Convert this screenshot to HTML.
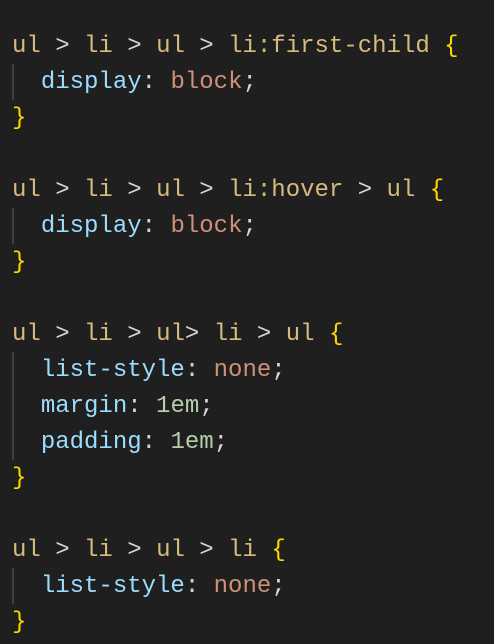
<!DOCTYPE html>
<html><head><style>
html,body{margin:0;padding:0;background:#1f1f1f;width:494px;height:644px;overflow:hidden}
pre{margin:0;position:absolute;left:12px;top:29px;font-family:"Liberation Mono",monospace;font-size:24px;line-height:36px;color:#d4d4d4}
.s{color:#d7ba7d}.p{color:#9cdcfe}.v{color:#ce9178}.n{color:#b5cea8}.b{color:#ffd700}
.g{position:absolute;left:12px;width:2px;background:#404040}
</style></head><body>
<div class="g" style="top:64px;height:36px"></div>
<div class="g" style="top:208px;height:36px"></div>
<div class="g" style="top:352px;height:108px"></div>
<div class="g" style="top:568px;height:36px"></div>
<pre><span class="s">ul</span> &gt; <span class="s">li</span> &gt; <span class="s">ul</span> &gt; <span class="s">li:first-child</span> <span class="b">{</span>
  <span class="p">display</span>: <span class="v">block</span>;
<span class="b">}</span>

<span class="s">ul</span> &gt; <span class="s">li</span> &gt; <span class="s">ul</span> &gt; <span class="s">li:hover</span> &gt; <span class="s">ul</span> <span class="b">{</span>
  <span class="p">display</span>: <span class="v">block</span>;
<span class="b">}</span>

<span class="s">ul</span> &gt; <span class="s">li</span> &gt; <span class="s">ul</span>&gt; <span class="s">li</span> &gt; <span class="s">ul</span> <span class="b">{</span>
  <span class="p">list-style</span>: <span class="v">none</span>;
  <span class="p">margin</span>: <span class="n">1em</span>;
  <span class="p">padding</span>: <span class="n">1em</span>;
<span class="b">}</span>

<span class="s">ul</span> &gt; <span class="s">li</span> &gt; <span class="s">ul</span> &gt; <span class="s">li</span> <span class="b">{</span>
  <span class="p">list-style</span>: <span class="v">none</span>;
<span class="b">}</span></pre>
</body></html>
